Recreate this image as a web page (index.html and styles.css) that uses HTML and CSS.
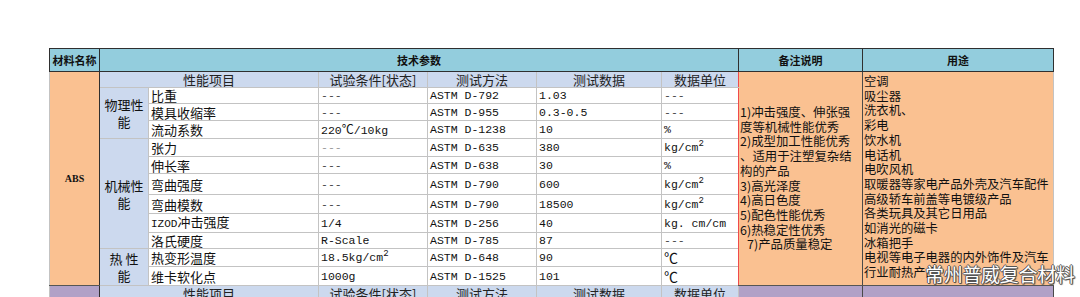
FILE: index.html
```html
<!DOCTYPE html>
<html lang="zh-CN">
<head>
<meta charset="utf-8">
<title>ABS 技术参数</title>
<link rel="stylesheet" href="styles.css">
</head>
<body>
<table class="sheet">
  <colgroup>
    <col class="w-mat"><col class="w-cat"><col class="w-name"><col class="w-cond"><col class="w-meth"><col class="w-data"><col class="w-unit"><col class="w-note"><col class="w-use">
  </colgroup>
  <tr class="h23">
    <td class="hd mat-b">材料名称</td>
    <td class="hd" colspan="6">技术参数</td>
    <td class="hd">备注说明</td>
    <td class="hd">用途</td>
  </tr>
  <tr class="h16">
    <td class="mat" rowspan="12">ABS</td>
    <td class="sub" colspan="2">性能项目</td>
    <td class="sub">试验条件[状态]</td>
    <td class="sub">测试方法</td>
    <td class="sub">测试数据</td>
    <td class="sub u">数据单位</td>
    <td class="note" rowspan="12">1)冲击强度、伸张强<br>度等机械性能优秀<br>2)成型加工性能优秀<br>、适用于注塑复杂结<br>构的产品<br>3)高光泽度<br>4)高日色度<br>5)配色性能优秀<br>6)热稳定性优秀<br><span class="ind">7)产品质量稳定</span></td>
    <td class="use" rowspan="12">空调<br>吸尘器<br>洗衣机、<br>彩电<br>饮水机<br>电话机<br>电吹风机<br>取暖器等家电产品外壳及汽车配件<br>高级轿车前盖等电镀级产品<br>各类玩具及其它日用品<br>如消光的磁卡<br>冰箱把手<br>电视等电子电器的内外饰件及汽车<br>行业耐热产品</td>
  </tr>
  <tr class="h16">
    <td class="cat" rowspan="3">物理性<br>能</td>
    <td class="c">比重</td><td class="c dash">---</td><td class="c en">ASTM D-792</td><td class="c en">1.03</td><td class="c u dash">---</td>
  </tr>
  <tr class="h17">
    <td class="c">模具收缩率</td><td class="c dash">---</td><td class="c en">ASTM D-955</td><td class="c en">0.3-0.5</td><td class="c u dash">---</td>
  </tr>
  <tr class="h17">
    <td class="c">流动系数</td><td class="c"><span class="en">220</span><span class="degs">℃</span><span class="en">/10kg</span></td><td class="c en">ASTM D-1238</td><td class="c en">10</td><td class="c u en">%</td>
  </tr>
  <tr class="h18">
    <td class="cat" rowspan="6">机械性<br>能</td>
    <td class="c">张力</td><td class="c dash light">---</td><td class="c en">ASTM D-635</td><td class="c en">380</td><td class="c u en">kg/cm<sup>2</sup></td>
  </tr>
  <tr class="h17">
    <td class="c">伸长率</td><td class="c dash">---</td><td class="c en">ASTM D-638</td><td class="c en">30</td><td class="c u en">%</td>
  </tr>
  <tr class="h21">
    <td class="c">弯曲强度</td><td class="c dash">---</td><td class="c en">ASTM D-790</td><td class="c en">600</td><td class="c u en">kg/cm<sup>2</sup></td>
  </tr>
  <tr class="h19">
    <td class="c">弯曲模数</td><td class="c dash">---</td><td class="c en">ASTM D-790</td><td class="c en">18500</td><td class="c u en">kg/cm<sup>2</sup></td>
  </tr>
  <tr class="h16">
    <td class="c"><span class="en izod">IZOD</span>冲击强度</td><td class="c en">1/4</td><td class="c en">ASTM D-256</td><td class="c en">40</td><td class="c u en">kg. cm/cm</td>
  </tr>
  <tr class="h16">
    <td class="c">洛氏硬度</td><td class="c en">R-Scale</td><td class="c en">ASTM D-785</td><td class="c en">87</td><td class="c u dash">---</td>
  </tr>
  <tr class="h18">
    <td class="cat" rowspan="2">热 性<br>能</td>
    <td class="c">热变形温度</td><td class="c en">18.5kg/cm<sup>2</sup></td><td class="c en">ASTM D-648</td><td class="c en">90</td><td class="c u deg">℃</td>
  </tr>
  <tr class="h19">
    <td class="c">维卡软化点</td><td class="c en">1000g</td><td class="c en">ASTM D-1525</td><td class="c en">101</td><td class="c u deg">℃</td>
  </tr>
  <tr class="h16">
    <td class="mat2"></td>
    <td class="sub" colspan="2">性能项目</td>
    <td class="sub">试验条件[状态]</td>
    <td class="sub">测试方法</td>
    <td class="sub">测试数据</td>
    <td class="sub">数据单位</td>
    <td class="purple"></td>
    <td class="purple"></td>
  </tr>
</table>
<div class="watermark">常州普威复合材料</div>
</body>
</html>
```
FILE: styles.css
```css
html, body {
  margin: 0;
  padding: 0;
  overflow: hidden;
  background: #ffffff;
}
body {
  padding: 48px 0 0 49px;
  position: relative;
  height: 297px;
  box-sizing: border-box;
}
.sheet {
  border-collapse: collapse;
  table-layout: fixed;
  width: 1004px;
  font-family: "Noto Sans CJK SC", sans-serif;
  font-size: 13px;
  line-height: 15px;
  color: #111;
  border: 1px solid #333;
}
.w-mat { width: 50px; }
.w-cat { width: 49px; }
.w-name { width: 170px; }
.w-cond { width: 109px; }
.w-meth { width: 109px; }
.w-data { width: 125px; }
.w-unit { width: 77px; }
.w-note { width: 124px; }
.w-use { width: 191px; }

.h23 { height: 23px; }
.h16 { height: 16px; }
.h17 { height: 17px; }
.h18 { height: 18px; }
.h19 { height: 19px; }
.h21 { height: 21px; }

.sheet td {
  border: 1px solid #c3c3c3;
  padding: 0 2px;
  vertical-align: middle;
  white-space: nowrap;
  overflow: hidden;
}
.sheet td.hd {
  background: #93cddd;
  border: 1px solid #2f2f2f;
  text-align: center;
  font-weight: 700;
  font-size: 11px;
  color: #111;
}
.sheet td.mat {
  background: #fac191;
  border-right: 1px solid #2f2f2f;
  border-bottom: 1px solid #555;
  text-align: center;
  font-family: "Liberation Serif", serif;
  font-weight: 700;
  font-size: 10px;
}
.sheet td.mat2 {
  background: #b1a1c7;
  border-right: 1px solid #2f2f2f;
}
.sheet td.sub {
  background: #ccd9ee;
  text-align: center;
  color: #222;
}
.sheet td.cat {
  background: #ccd9ee;
  text-align: center;
  line-height: 17px;
  white-space: normal;
}
.sheet td.u {
  border-right: 1px solid #f04a4a;
}
.sheet td.note {
  background: #fac191;
  border-left: 1px solid #f04a4a;
  border-right: 1px solid #4a4a4a;
  border-bottom: 1px solid #555;
  font-size: 12.4px;
  line-height: 14.7px;
  padding: 0 1px;
  vertical-align: middle;
}
.ind { padding-left: 7px; }
.sheet td.use {
  background: #fac191;
  border-bottom: 1px solid #555;
  font-size: 12.3px;
  line-height: 14.7px;
  padding: 2px 1px 0;
  vertical-align: top;
}
.sheet td.purple {
  background: #b1a1c7;
  border-right: 1px solid #4a4a4a;
}
.sheet td.c {
  background: #ffffff;
}
.en {
  font-family: "Liberation Mono", monospace;
  font-size: 11.5px;
}
.izod { font-size: 11px; }
.dash {
  font-family: "Liberation Mono", monospace;
  font-size: 11.5px;
  color: #444;
}
.light { color: #999; }
.deg { font-size: 14px; }
.degs { font-size: 12px; }
sup {
  font-size: 9px;
  line-height: 0;
  vertical-align: 5px;
}
.watermark {
  position: absolute;
  left: 925px;
  top: 262px;
  font-family: "Noto Sans CJK SC", sans-serif;
  font-size: 19px;
  line-height: 24px;
  color: #ffffff;
  letter-spacing: -0.3px;
  text-shadow: -1px 0 0 #555, 1px 0 0 #555, 0 -1px 0 #555, 0 1px 0 #555, 1px 1px 1px #333;
}
```
